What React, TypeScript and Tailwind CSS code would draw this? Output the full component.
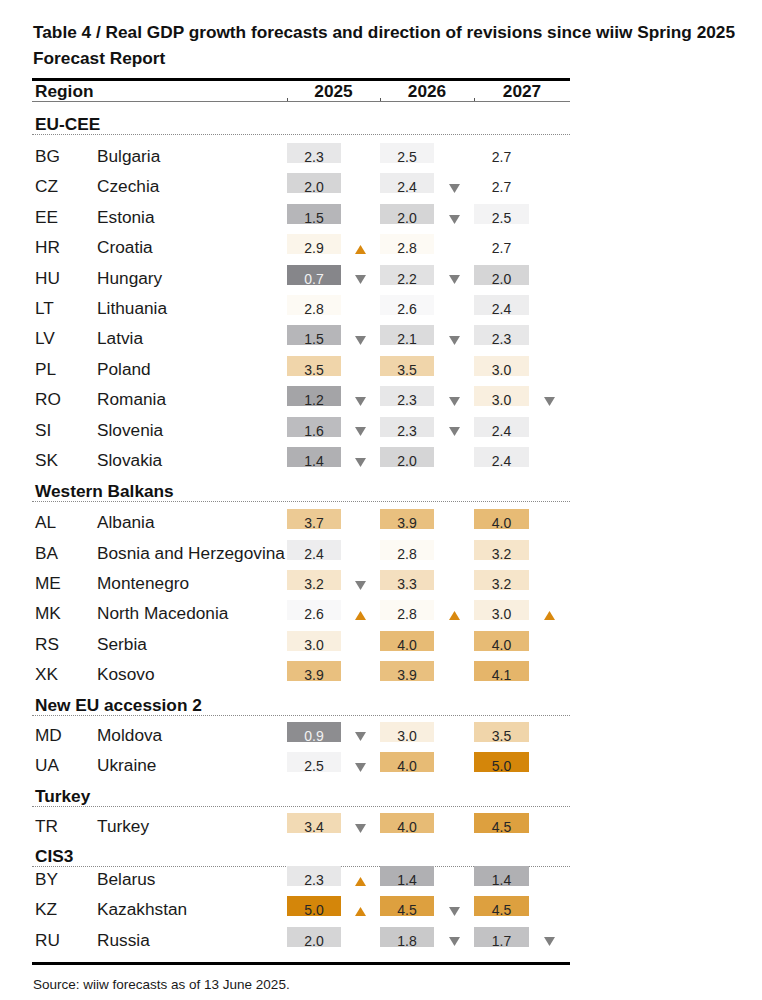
import React from "react";

type Dir = "up" | "down" | null;
type Row = { code: string; name: string; v: [string, Dir][] };
type Section = { title: string; hClass: string; mbClass: string; rows: Row[] };

const BG: Record<string, string> = {
  "0.7": "bg-[#86868a] text-[#f2f2f2]",
  "0.9": "bg-[#8d8d90] text-[#f2f2f2]",
  "1.2": "bg-[#a4a4a7] text-[#262626]",
  "1.4": "bg-[#b0b0b3] text-[#262626]",
  "1.5": "bg-[#b6b6b9] text-[#262626]",
  "1.6": "bg-[#bcbcbf] text-[#262626]",
  "1.7": "bg-[#c2c2c4] text-[#262626]",
  "1.8": "bg-[#c9c9ca] text-[#262626]",
  "2.0": "bg-[#d5d5d6] text-[#262626]",
  "2.1": "bg-[#dbdbdc] text-[#262626]",
  "2.2": "bg-[#e1e1e2] text-[#262626]",
  "2.3": "bg-[#e7e7e8] text-[#262626]",
  "2.4": "bg-[#ededee] text-[#262626]",
  "2.5": "bg-[#f3f3f4] text-[#262626]",
  "2.6": "bg-[#f8f8f9] text-[#262626]",
  "2.7": "bg-white text-[#262626]",
  "2.8": "bg-[#fdfaf4] text-[#262626]",
  "2.9": "bg-[#fbf5ea] text-[#262626]",
  "3.0": "bg-[#f9efdf] text-[#262626]",
  "3.2": "bg-[#f6e5ca] text-[#262626]",
  "3.3": "bg-[#f4dfbf] text-[#262626]",
  "3.4": "bg-[#f2dab4] text-[#262626]",
  "3.5": "bg-[#f0d5aa] text-[#262626]",
  "3.7": "bg-[#ecca94] text-[#262626]",
  "3.9": "bg-[#e9c07f] text-[#262626]",
  "4.0": "bg-[#e7bb75] text-[#262626]",
  "4.1": "bg-[#e5b56a] text-[#262626]",
  "4.5": "bg-[#dda03f] text-[#262626]",
  "5.0": "bg-[#d4860a] text-[#262626]",
};

const sections: Section[] = [
  {
    title: "EU-CEE",
    hClass: "h-[33px]",
    mbClass: "mb-[3px]",
    rows: [
      { code: "BG", name: "Bulgaria", v: [["2.3", null], ["2.5", null], ["2.7", null]] },
      { code: "CZ", name: "Czechia", v: [["2.0", null], ["2.4", "down"], ["2.7", null]] },
      { code: "EE", name: "Estonia", v: [["1.5", null], ["2.0", "down"], ["2.5", null]] },
      { code: "HR", name: "Croatia", v: [["2.9", "up"], ["2.8", null], ["2.7", null]] },
      { code: "HU", name: "Hungary", v: [["0.7", "down"], ["2.2", "down"], ["2.0", null]] },
      { code: "LT", name: "Lithuania", v: [["2.8", null], ["2.6", null], ["2.4", null]] },
      { code: "LV", name: "Latvia", v: [["1.5", "down"], ["2.1", "down"], ["2.3", null]] },
      { code: "PL", name: "Poland", v: [["3.5", null], ["3.5", null], ["3.0", null]] },
      { code: "RO", name: "Romania", v: [["1.2", "down"], ["2.3", "down"], ["3.0", "down"]] },
      { code: "SI", name: "Slovenia", v: [["1.6", "down"], ["2.3", "down"], ["2.4", null]] },
      { code: "SK", name: "Slovakia", v: [["1.4", "down"], ["2.0", null], ["2.4", null]] },
    ],
  },
  {
    title: "Western Balkans",
    hClass: "h-[30px]",
    mbClass: "mb-[2px]",
    rows: [
      { code: "AL", name: "Albania", v: [["3.7", null], ["3.9", null], ["4.0", null]] },
      { code: "BA", name: "Bosnia and Herzegovina", v: [["2.4", null], ["2.8", null], ["3.2", null]] },
      { code: "ME", name: "Montenegro", v: [["3.2", "down"], ["3.3", null], ["3.2", null]] },
      { code: "MK", name: "North Macedonia", v: [["2.6", "up"], ["2.8", "up"], ["3.0", "up"]] },
      { code: "RS", name: "Serbia", v: [["3.0", null], ["4.0", null], ["4.0", null]] },
      { code: "XK", name: "Kosovo", v: [["3.9", null], ["3.9", null], ["4.1", null]] },
    ],
  },
  {
    title: "New EU accession 2",
    hClass: "h-[29px]",
    mbClass: "mb-[1px]",
    rows: [
      { code: "MD", name: "Moldova", v: [["0.9", "down"], ["3.0", null], ["3.5", null]] },
      { code: "UA", name: "Ukraine", v: [["2.5", "down"], ["4.0", null], ["5.0", null]] },
    ],
  },
  {
    title: "Turkey",
    hClass: "h-[30px]",
    mbClass: "mb-[1px]",
    rows: [{ code: "TR", name: "Turkey", v: [["3.4", "down"], ["4.0", null], ["4.5", null]] }],
  },
  {
    title: "CIS3",
    hClass: "h-[28px]",
    mbClass: "mb-[-6px]",
    rows: [
      { code: "BY", name: "Belarus", v: [["2.3", "up"], ["1.4", null], ["1.4", null]] },
      { code: "KZ", name: "Kazakhstan", v: [["5.0", "up"], ["4.5", "down"], ["4.5", null]] },
      { code: "RU", name: "Russia", v: [["2.0", null], ["1.8", "down"], ["1.7", "down"]] },
    ],
  },
];

const GRID = "grid grid-cols-[65px_190px_54px_39px_54px_40px_55px_41px]";

function Arrow({ dir }: { dir: Dir }) {
  if (dir === "down")
    return (
      <svg width="11" height="9" viewBox="0 0 11 9" className="inline-block">
        <polygon points="0,0 11,0 5.5,9" fill="#808080" />
      </svg>
    );
  if (dir === "up")
    return (
      <svg width="11" height="9" viewBox="0 0 11 9" className="inline-block">
        <polygon points="0,9 11,9 5.5,0" fill="#d9890f" />
      </svg>
    );
  return null;
}

function DataRow({ row }: { row: Row }) {
  return (
    <div className={`${GRID} items-baseline h-[30.4px] pt-[5px]`}>
      <div className="pl-[3px] text-[17.25px] leading-[20px] text-[#1a1a1a]">{row.code}</div>
      <div className="whitespace-nowrap text-[17.25px] leading-[20px] text-[#1a1a1a]">{row.name}</div>
      {row.v.map(([val, dir], i) => (
        <React.Fragment key={i}>
          <div className={`${BG[val]} h-[20px] pt-[8px] text-center text-[14px] leading-[12px]`}>{val}</div>
          <div className="text-center text-[14px] leading-[12px]">
            <Arrow dir={dir} />
          </div>
        </React.Fragment>
      ))}
    </div>
  );
}

export default function App() {
  return (
    <div className="min-h-[1000px] bg-white pl-[32px] font-['Liberation_Sans',Arial,sans-serif] text-[#1a1a1a]">
      <h1 className="w-[725px] pl-[1px] pt-[19px] mb-[7px] text-[17.25px] leading-[26px] font-bold text-[#111]">
        Table 4 / Real GDP growth forecasts and direction of revisions since wiiw Spring 2025 Forecast Report
      </h1>
      <div className="w-[538px] border-t-[3px] border-black">
        <div className={`${GRID} h-[21px] border-b border-[#7a7a7a] text-[17.25px] leading-[20px] font-bold text-[#111]`}>
          <div className="col-span-2 pl-[3px]">Region</div>
          <div className="col-span-2 relative text-center">
            2025
            <span className="absolute left-0 bottom-0 h-[3px] w-px bg-[#555]" />
          </div>
          <div className="col-span-2 relative text-center">
            2026
            <span className="absolute left-0 bottom-0 h-[3px] w-px bg-[#555]" />
          </div>
          <div className="col-span-2 relative text-center">
            2027
            <span className="absolute left-0 bottom-0 h-[3px] w-px bg-[#555]" />
          </div>
        </div>
        {sections.map((s) => (
          <div key={s.title}>
            <div
              className={`${s.hClass} ${s.mbClass} flex items-end border-b border-dotted border-[#8a8a8a] pl-[3px] text-[17.25px] leading-[20px] font-bold text-[#111]`}
            >
              {s.title}
            </div>
            {s.rows.map((r) => (
              <DataRow key={r.code} row={r} />
            ))}
          </div>
        ))}
        <div className="mt-[10px] border-t-[3px] border-black" />
      </div>
      <p className="mt-[12px] pl-[1px] text-[13.5px] leading-[16px] text-[#1a1a1a]">
        Source: wiiw forecasts as of 13 June 2025.
      </p>
    </div>
  );
}
